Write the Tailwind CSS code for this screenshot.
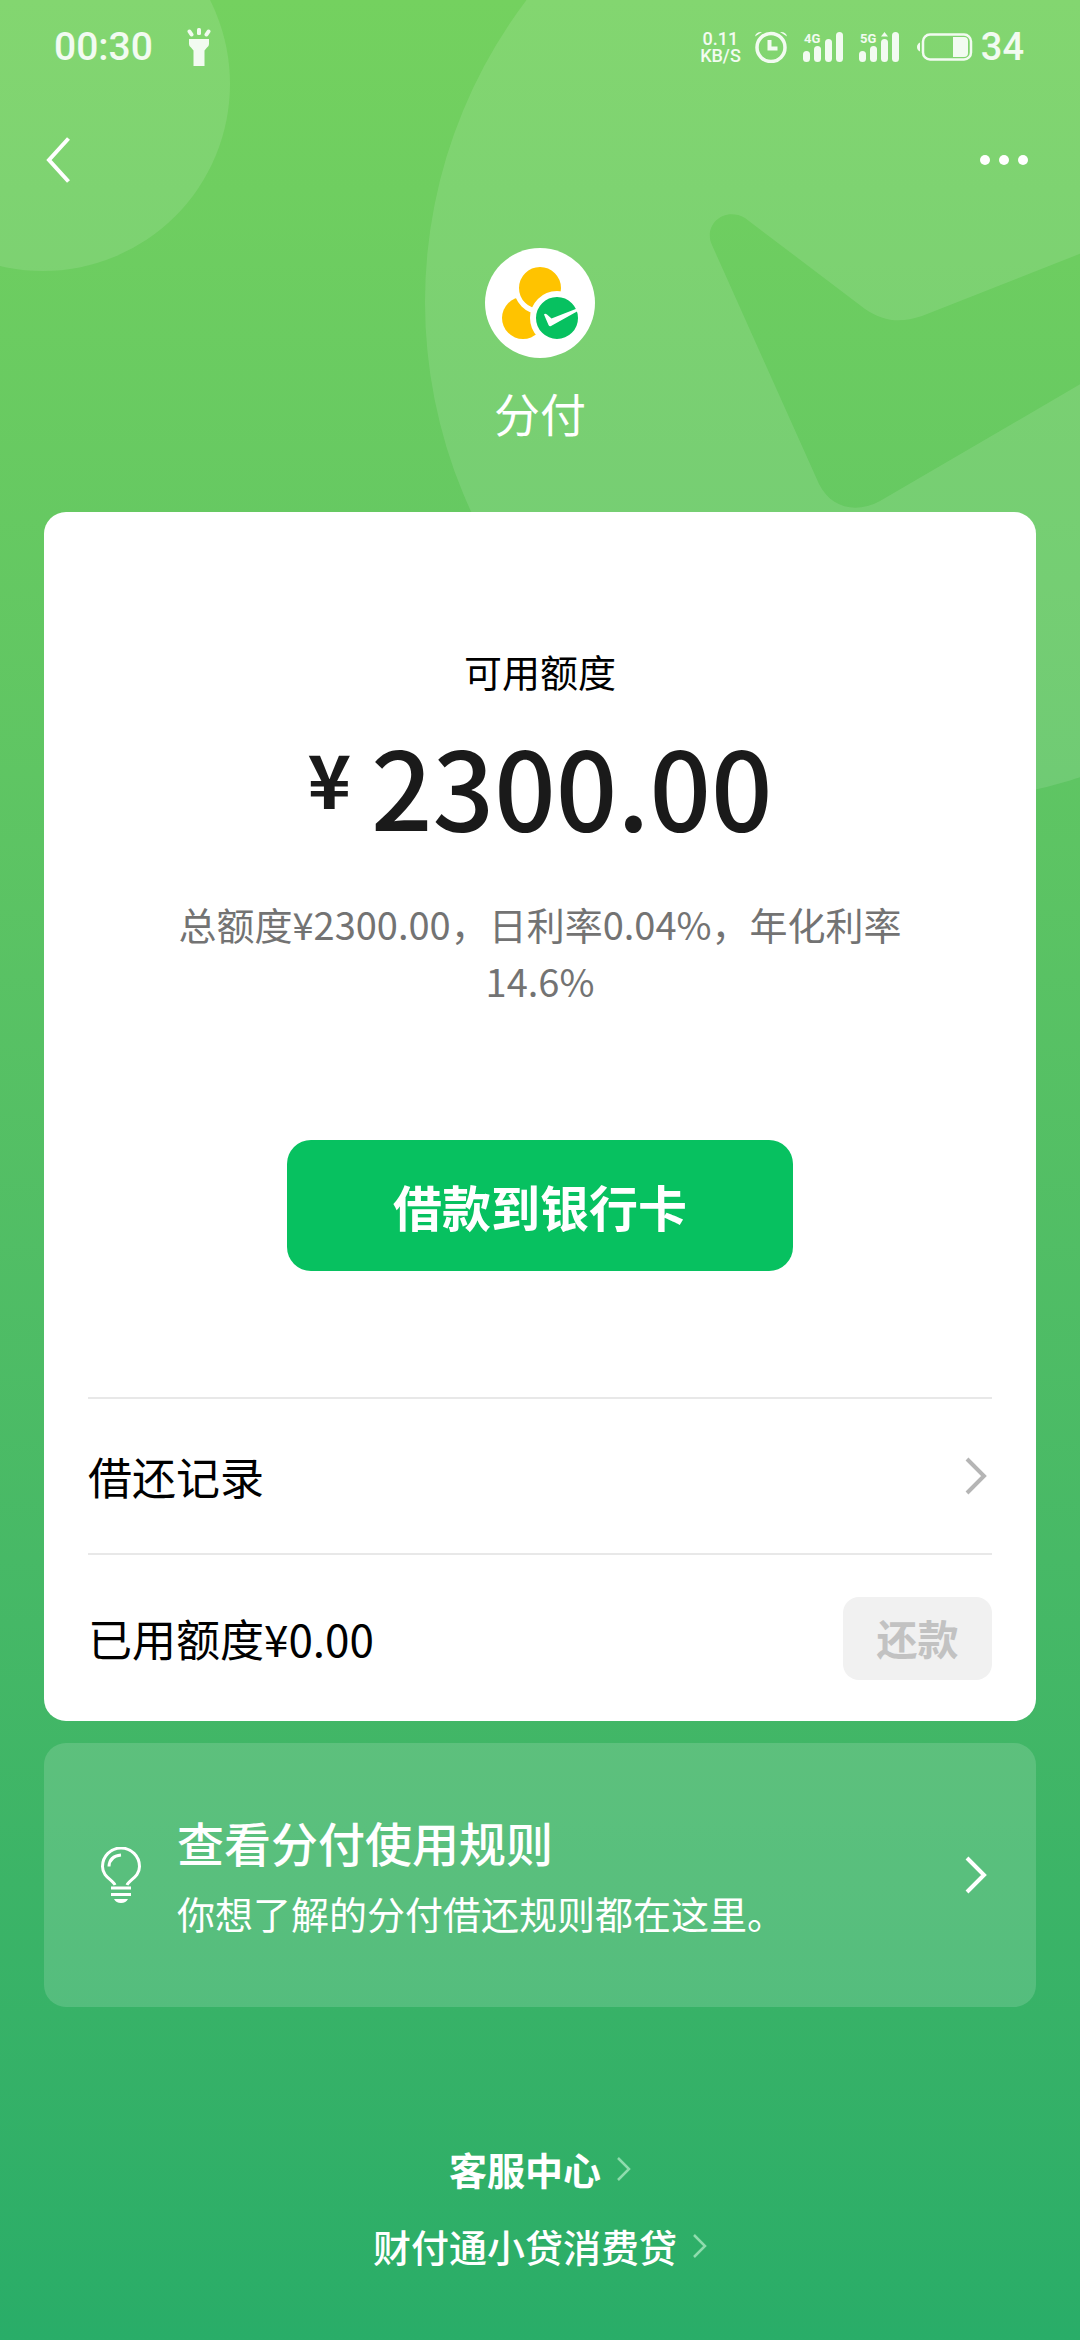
<!DOCTYPE html>
<html lang="zh-CN">
<head>
<meta charset="utf-8">
<meta name="viewport" content="width=device-width, initial-scale=1">
<title>分付</title>
<script src="https://cdn.jsdelivr.net/npm/@tailwindcss/browser@4"></script>
</head>
<body class="font-['Noto_Sans_CJK_SC',sans-serif]">
<div class="relative isolate flex min-h-screen flex-col overflow-hidden bg-linear-to-b from-[#74d15f] to-[#29ad68] text-white">

  <!-- Decorative circles and tick -->
  <svg class="absolute top-0 right-0 -z-10 h-[820px] w-[1080px]" viewBox="0 0 1080 820" aria-hidden="true">
    <circle cx="43" cy="84" r="187" fill="#fff" fill-opacity=".11"/>
    <path fill="#fff" fill-opacity=".11" fill-rule="evenodd" d="M425 302a500 500 0 1 0 1000 0a500 500 0 1 0 -1000 0ZM712 245C703 226 723 206 745 218L865 309C884 322 901 323 922 316L1120 238V361L880 501C856 514 831 508 819 484Z"/>
  </svg>

  <!-- Status bar -->
  <div class="flex h-[94px] items-center justify-between pr-[56px] pl-[54px] font-[Roboto,sans-serif] text-white/90">
    <div class="flex items-center gap-[34px]">
      <span class="text-[39px] leading-none font-medium">00:30</span>
      <svg class="h-[38px] w-6" viewBox="0 0 24 38" fill="currentColor" aria-hidden="true">
        <path d="M2 11h20v5q0 2-2 3.500l-2.500 3V38h-11V22.500l-2.500-3Q2 18 2 16Z"/>
        <rect x="10" y="0" width="4" height="7" rx="1.500"/>
        <path d="M2.500 3.500l2 3M21.500 3.500l-2 3" stroke="currentColor" stroke-width="4" stroke-linecap="round"/>
      </svg>
    </div>
    <div class="flex items-center">
      <div class="mr-[14px] text-center text-[18px] leading-[17px] font-medium">0.11<br>KB/S</div>
      <svg class="mr-4 h-8 w-8" viewBox="0 0 32 32" fill="none" stroke="currentColor" aria-label="闹钟">
        <circle cx="16" cy="16.500" r="14" stroke-width="3.500"/>
        <path d="M14.500 9v8.500h8" stroke-width="4"/>
        <path d="M0 5.500Q1 .5 7 1ZM32 5.500Q31 .5 25 1Z" fill="currentColor" stroke="none"/>
      </svg>
      <svg class="mr-4 h-[42px] w-10" viewBox="0 -6 40 42" fill="currentColor" aria-label="4G">
        <text x="1" y="11" font-size="13" font-weight="700">4G</text>
        <rect x="0" y="19" width="7" height="11" rx="3.500"/><rect x="11" y="14" width="7" height="16" rx="3.500"/><rect x="22" y="7" width="7" height="23" rx="3.500"/><rect x="33" y="0" width="7" height="30" rx="3.500"/>
      </svg>
      <svg class="mr-[18px] h-[42px] w-10" viewBox="0 -6 40 42" fill="currentColor" aria-label="5G">
        <text x="1" y="11" font-size="13" font-weight="700">5G</text>
        <rect x="0" y="19" width="7" height="11" rx="3.500"/><rect x="11" y="14" width="7" height="16" rx="3.500"/><rect x="22" y="7" width="7" height="23" rx="3.500"/><rect x="33" y="0" width="7" height="30" rx="3.500"/><path d="M25.500 0l3.500 4.500h-7Z"/>
      </svg>
      <svg class="mr-2 h-7 w-14" viewBox="0 0 56 28" aria-label="电量">
        <path d="M3 9.500v9Q0 17 0 14T3 9.500Z" fill="currentColor"/>
        <rect x="6" y="1.500" width="48" height="25" rx="7" fill="none" stroke="currentColor" stroke-width="2.500"/>
        <path d="M36 4h11q4 0 4 4v12q0 4-4 4H36Z" fill="currentColor"/>
      </svg>
      <span class="text-[38px] leading-none font-medium">34</span>
    </div>
  </div>

  <!-- Navigation -->
  <nav class="flex h-[132px] items-center justify-between pr-12 pl-[34px]">
    <button type="button" class="flex h-16 w-12 items-center justify-center" aria-label="返回">
      <svg class="h-[46px] w-6" viewBox="0 0 24 46" fill="none" stroke="currentColor" stroke-width="4"><path d="M22.500 1.500L3 23L22.500 44.500"/></svg>
    </button>
    <button type="button" class="flex h-16 items-center gap-[9px] px-1" aria-label="更多">
      <span class="size-[10px] rounded-full bg-white"></span><span class="size-[10px] rounded-full bg-white"></span><span class="size-[10px] rounded-full bg-white"></span>
    </button>
  </nav>

  <!-- Brand -->
  <header class="flex flex-col items-center pt-[22px] pb-[68px]">
    <svg class="size-[110px]" viewBox="0 0 110 110" aria-hidden="true">
      <circle cx="55" cy="55" r="55" fill="#fff"/>
      <circle cx="38" cy="70" r="21" fill="#ffc300"/>
      <circle cx="55" cy="40" r="23.500" fill="#ffc300" stroke="#fff" stroke-width="5"/>
      <circle cx="72" cy="70" r="24" fill="#07c160" stroke="#fff" stroke-width="6"/>
      <path d="M59 66.500q1-1.500 3 0l4.500 4L92 60.500v3L66 78q-1.500 1-2.500-1Z" fill="#fff"/>
    </svg>
    <h1 class="mt-[22px] text-[46px] leading-[64px] font-normal">分付</h1>
  </header>

  <main class="flex flex-col gap-[22px] px-11">
    <section class="flex flex-col rounded-[22px] bg-white px-11 text-black">
      <div class="flex flex-col items-center px-[52px] pt-[131px]">
        <h2 class="text-[38px] leading-[56px] font-normal">可用额度</h2>
        <p class="mt-[30px] flex items-start gap-5 leading-[110px] font-medium text-[#1a1a1a]">
          <span class="text-[74px] leading-[96px] font-bold">¥</span><span class="text-[108px]">2300.00</span>
        </p>
        <p class="mt-14 text-center text-[38px] leading-[57px] text-[#737373]">总额度¥2300.00，日利率0.04%，年化利率14.6%</p>
        <button type="button" class="mt-[131px] h-[131px] w-[506px] rounded-3xl bg-[#07c160] text-[49px] font-bold text-white">借款到银行卡</button>
      </div>
      <a href="#records" class="mt-[126px] flex h-[156px] items-center justify-between border-t-2 border-[#e8e8e8] pr-1 text-[44px]">
        借还记录
        <svg class="h-[38px] w-6" viewBox="0 0 24 38" fill="none" stroke="#b5b5b5" stroke-width="4"><path d="M3 2L20 19L3 36"/></svg>
      </a>
      <div class="flex h-[168px] items-center justify-between border-t-2 border-[#e8e8e8] text-[44px]">
        <span>已用额度¥0.00</span>
        <button type="button" disabled class="h-[83px] w-[149px] rounded-2xl bg-[#f1f1f1] text-[41px] font-bold text-[#c2c2c2]">还款</button>
      </div>
    </section>

    <a href="#rules" class="flex h-[264px] items-center rounded-[22px] bg-white/15 pr-12 pl-[57px]">
      <svg class="h-14 w-10" viewBox="0 0 40 56" fill="none" stroke="currentColor" stroke-width="3" aria-hidden="true">
        <path d="M14 38C12 33 1.500 30 1.500 19.500a18.500 18.500 0 0 1 37 0C38.500 30 28 33 26 38"/>
        <path d="M8 19.500Q8.500 9 20 8"/>
        <path d="M10 41h20M10 47.500h20"/>
        <path d="M13 52h14q-2 4-7 4t-7-4Z" fill="currentColor" stroke="none"/>
      </svg>
      <div class="ml-9 flex-1 pt-1">
        <div class="text-[47px] leading-[72px] font-medium">查看分付使用规则</div>
        <div class="text-[38px] leading-[70px]">你想了解的分付借还规则都在这里。</div>
      </div>
      <svg class="h-[38px] w-6" viewBox="0 0 24 38" fill="none" stroke="currentColor" stroke-width="4" aria-hidden="true"><path d="M3 2L20 19L3 36"/></svg>
    </a>
  </main>

  <footer class="flex flex-col items-center pt-[123px] pb-12 text-[38px] leading-[77px]">
    <a href="#service" class="flex items-center gap-4 font-bold">客服中心
      <svg class="h-6 w-[14px]" viewBox="0 0 14 24" fill="none" stroke="#8fdcae" stroke-width="2.500" aria-hidden="true"><path d="M1 1L12 12L1 23"/></svg>
    </a>
    <a href="#loan" class="flex items-center gap-4 font-medium">财付通小贷消费贷
      <svg class="h-6 w-[14px]" viewBox="0 0 14 24" fill="none" stroke="#8fdcae" stroke-width="2.500" aria-hidden="true"><path d="M1 1L12 12L1 23"/></svg>
    </a>
  </footer>
</div>
</body>
</html>
